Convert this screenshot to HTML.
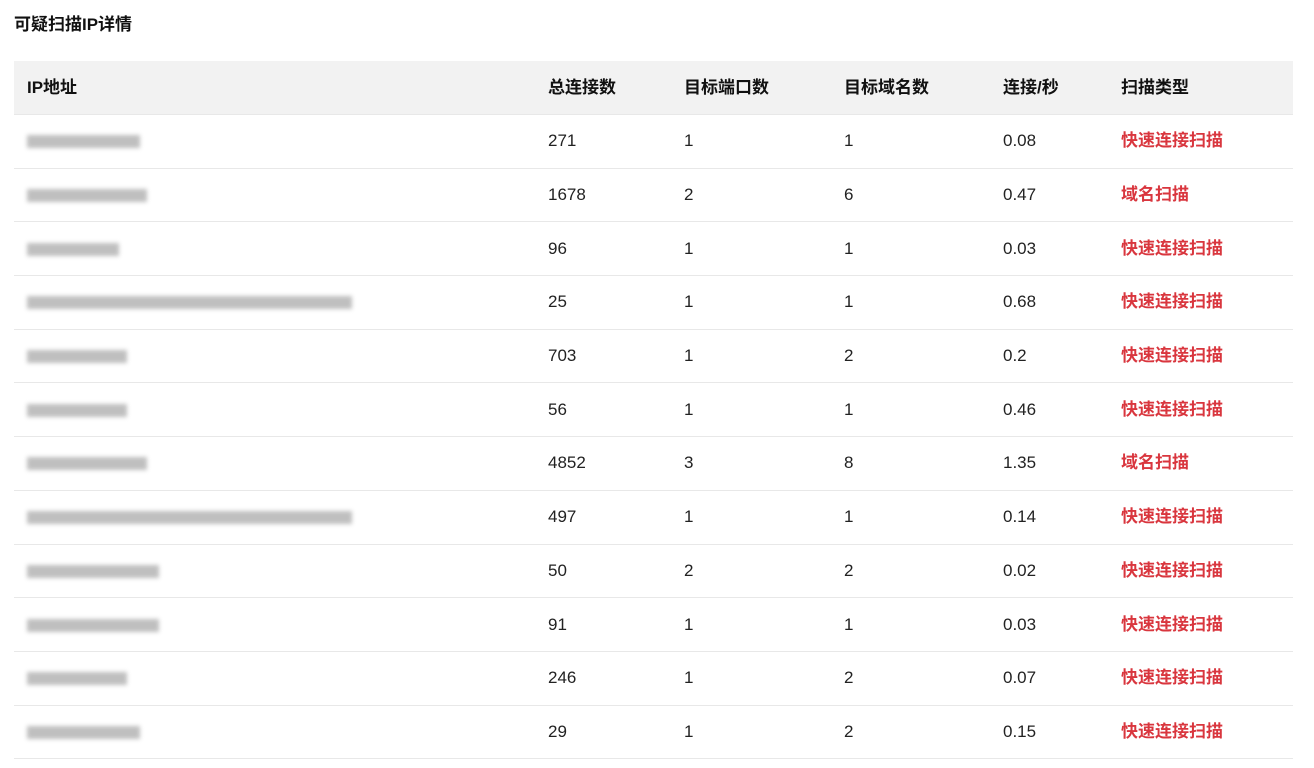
<!DOCTYPE html>
<html><head><meta charset="utf-8"><style>
body{margin:0;background:#fff;font-family:"Liberation Sans","Noto Sans CJK SC",sans-serif;color:#222;width:1314px;height:768px;overflow:hidden}
h1{position:absolute;left:14px;top:15px;margin:0;font-size:17px;line-height:20px;font-weight:bold;color:#111}
table{position:absolute;left:14px;top:61px;width:1279px;border-collapse:collapse;font-size:17px;line-height:20px}
th{background:#f2f2f2;height:53px;text-align:left;font-weight:bold;padding:0;color:#111;vertical-align:middle}
td{height:52.7px;padding:0;border-top:1px solid #e8e8e8;vertical-align:middle}
tr:last-child td{border-bottom:1px solid #e8e8e8}
th:first-child,td:first-child{padding-left:13px}
.r{color:#d9363e;font-weight:bold}
.b{display:inline-block;height:13px;background:#b0b0b0;filter:blur(2px);vertical-align:middle;opacity:.8}
</style></head><body>
<h1>可疑扫描IP详情</h1>
<table>
<colgroup><col style="width:534px"><col style="width:136px"><col style="width:160px"><col style="width:159px"><col style="width:118px"><col></colgroup>
<tr><th>IP地址</th><th>总连接数</th><th>目标端口数</th><th>目标域名数</th><th>连接/秒</th><th>扫描类型</th></tr>
<tr><td><span class="b" style="width:113px"></span></td><td>271</td><td>1</td><td>1</td><td>0.08</td><td class="r">快速连接扫描</td></tr>
<tr><td><span class="b" style="width:120px"></span></td><td>1678</td><td>2</td><td>6</td><td>0.47</td><td class="r">域名扫描</td></tr>
<tr><td><span class="b" style="width:92px"></span></td><td>96</td><td>1</td><td>1</td><td>0.03</td><td class="r">快速连接扫描</td></tr>
<tr><td><span class="b" style="width:325px"></span></td><td>25</td><td>1</td><td>1</td><td>0.68</td><td class="r">快速连接扫描</td></tr>
<tr><td><span class="b" style="width:100px"></span></td><td>703</td><td>1</td><td>2</td><td>0.2</td><td class="r">快速连接扫描</td></tr>
<tr><td><span class="b" style="width:100px"></span></td><td>56</td><td>1</td><td>1</td><td>0.46</td><td class="r">快速连接扫描</td></tr>
<tr><td><span class="b" style="width:120px"></span></td><td>4852</td><td>3</td><td>8</td><td>1.35</td><td class="r">域名扫描</td></tr>
<tr><td><span class="b" style="width:325px"></span></td><td>497</td><td>1</td><td>1</td><td>0.14</td><td class="r">快速连接扫描</td></tr>
<tr><td><span class="b" style="width:132px"></span></td><td>50</td><td>2</td><td>2</td><td>0.02</td><td class="r">快速连接扫描</td></tr>
<tr><td><span class="b" style="width:132px"></span></td><td>91</td><td>1</td><td>1</td><td>0.03</td><td class="r">快速连接扫描</td></tr>
<tr><td><span class="b" style="width:100px"></span></td><td>246</td><td>1</td><td>2</td><td>0.07</td><td class="r">快速连接扫描</td></tr>
<tr><td><span class="b" style="width:113px"></span></td><td>29</td><td>1</td><td>2</td><td>0.15</td><td class="r">快速连接扫描</td></tr>
</table>
</body></html>
